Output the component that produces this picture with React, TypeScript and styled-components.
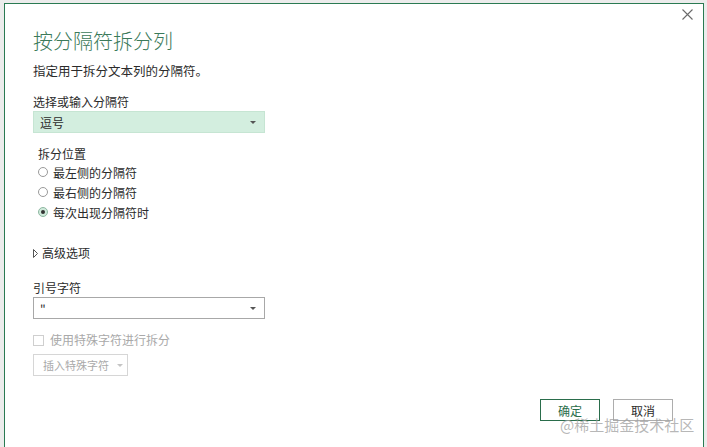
import React from "react";
import styled, { createGlobalStyle } from "styled-components";

const Global = createGlobalStyle`
  html, body { margin: 0; padding: 0; background: #ececec; overflow: hidden; }
  body { font-family: "Noto Sans CJK SC", "Noto Sans", sans-serif; color: #333; }
`;

const Page = styled.div`
  width: 707px;
  height: 447px;
  padding: 3px 0 0 4px;
  box-sizing: border-box;
  overflow: hidden;
  position: relative;
`;

const Dialog = styled.div`
  width: 700px;
  height: 470px;
  box-sizing: border-box;
  border: 1px solid #2a7a52;
  background: #fff;
  display: flex;
  flex-direction: column;
`;

const TopBar = styled.div`
  display: flex;
  justify-content: flex-end;
  padding: 5px 10px 0 0;
  height: 11px;
`;

const CloseBtn = styled.div`
  width: 11px;
  height: 11px;
  display: flex;
`;

const Body = styled.div`
  display: flex;
  flex-direction: column;
  align-items: flex-start;
  padding: 0 30px 0 28px;
`;

const Title = styled.div`
  margin-top: 8px;
  font-size: 20px;
  line-height: 26px;
  color: #3b7a5a;
  font-weight: 300;
`;

const Subtitle = styled.div`
  margin-top: 8px;
  font-size: 12.5px;
  line-height: 18px;
  color: #2b2b2b;
`;

const Label = styled.div<{ $mt: number; $indent?: number }>`
  margin-top: ${(p) => p.$mt}px;
  margin-left: ${(p) => p.$indent ?? 0}px;
  font-size: 12px;
  line-height: 16px;
  color: #2b2b2b;
`;

const Select = styled.div<{ $active?: boolean }>`
  margin-top: 1px;
  width: 232px;
  height: 22px;
  box-sizing: border-box;
  border: 1px solid ${(p) => (p.$active ? "#c6e5d3" : "#a8a8a8")};
  background: ${(p) => (p.$active ? "#d3eedf" : "#fff")};
  display: flex;
  align-items: center;
  justify-content: space-between;
  padding: 0 8px 0 6px;
  font-size: 12px;
  color: #2b2b2b;
`;

const Arrow = styled.span<{ $muted?: boolean }>`
  flex-shrink: 0;
  width: 0;
  height: 0;
  border-left: 3px solid transparent;
  border-right: 3px solid transparent;
  border-top: 3px solid ${(p) => (p.$muted ? "#c4c4c4" : "#555")};
`;

const RadioGroup = styled.div`
  display: flex;
  flex-direction: column;
  margin-left: 5px;
`;

const RadioRow = styled.div`
  display: flex;
  align-items: center;
  height: 20px;
  gap: 5px;
  font-size: 12px;
  color: #2b2b2b;
`;

const Radio = styled.span<{ $checked?: boolean }>`
  width: 10px;
  height: 10px;
  box-sizing: border-box;
  border-radius: 50%;
  border: 1px solid ${(p) => (p.$checked ? "#8fb8a2" : "#9a9a9a")};
  background: ${(p) => (p.$checked ? "#cfeadb" : "#fff")};
  display: flex;
  align-items: center;
  justify-content: center;
  &::after {
    content: "";
    display: ${(p) => (p.$checked ? "block" : "none")};
    width: 4px;
    height: 4px;
    border-radius: 50%;
    background: #333;
  }
`;

const Expander = styled.div`
  margin-top: 23px;
  display: flex;
  align-items: center;
  gap: 4px;
  font-size: 12px;
  line-height: 16px;
  color: #2b2b2b;
`;

const CheckRow = styled.div`
  margin-top: 13px;
  display: flex;
  align-items: center;
  gap: 6px;
  font-size: 12px;
  line-height: 16px;
  color: #a9a9a9;
`;

const Checkbox = styled.span`
  width: 11px;
  height: 11px;
  box-sizing: border-box;
  border: 1px solid #cfcfcf;
  background: #fff;
`;

const DisabledButton = styled.div`
  margin-top: 6px;
  height: 22px;
  width: 95px;
  box-sizing: border-box;
  border: 1px solid #d6d6d6;
  display: flex;
  align-items: center;
  gap: 8px;
  padding-left: 9px;
  font-size: 11px;
  color: #a9a9a9;
  white-space: nowrap;
`;

const Footer = styled.div`
  margin-top: 23px;
  display: flex;
  justify-content: flex-end;
  gap: 13px;
  padding-right: 30px;
`;

const Button = styled.div<{ $primary?: boolean }>`
  width: 60px;
  height: 22px;
  box-sizing: border-box;
  border: 1px solid ${(p) => (p.$primary ? "#2a6d4b" : "#adadad")};
  display: flex;
  align-items: center;
  justify-content: center;
  font-size: 12px;
  color: ${(p) => (p.$primary ? "#2a6d4b" : "#2b2b2b")};
  background: #fff;
`;

const Watermark = styled.div`
  position: absolute;
  left: 560px;
  top: 415px;
  font-size: 15px;
  line-height: 20px;
  color: rgba(160, 160, 160, 0.75);
  white-space: nowrap;
  pointer-events: none;
`;

export default function App() {
  return (
    <>
      <Global />
      <Page>
        <Dialog>
          <TopBar>
            <CloseBtn>
              <svg width="11" height="11" viewBox="0 0 11 11">
                <path d="M0.5 0.5 L10.5 10.5 M10.5 0.5 L0.5 10.5" stroke="#6a6a6a" strokeWidth="1.1" fill="none" />
              </svg>
            </CloseBtn>
          </TopBar>
          <Body>
            <Title>按分隔符拆分列</Title>
            <Subtitle>指定用于拆分文本列的分隔符。</Subtitle>
            <Label $mt={14}>选择或输入分隔符</Label>
            <Select $active>
              <span>逗号</span>
              <Arrow />
            </Select>
            <Label $mt={13} $indent={5}>拆分位置</Label>
            <RadioGroup>
              <RadioRow><Radio />最左侧的分隔符</RadioRow>
              <RadioRow><Radio />最右侧的分隔符</RadioRow>
              <RadioRow><Radio $checked />每次出现分隔符时</RadioRow>
            </RadioGroup>
            <Expander>
              <svg width="5" height="9" viewBox="0 0 5 9">
                <path d="M0.5 0.5 L4.5 4.5 L0.5 8.5 Z" stroke="#555" strokeWidth="1" fill="none" />
              </svg>
              高级选项
            </Expander>
            <Label $mt={19}>引号字符</Label>
            <Select>
              <span>"</span>
              <Arrow />
            </Select>
            <CheckRow>
              <Checkbox />
              使用特殊字符进行拆分
            </CheckRow>
            <DisabledButton>
              插入特殊字符
              <Arrow $muted />
            </DisabledButton>
          </Body>
          <Footer>
            <Button $primary>确定</Button>
            <Button>取消</Button>
          </Footer>
        </Dialog>
        <Watermark>@稀土掘金技术社区</Watermark>
      </Page>
    </>
  );
}
